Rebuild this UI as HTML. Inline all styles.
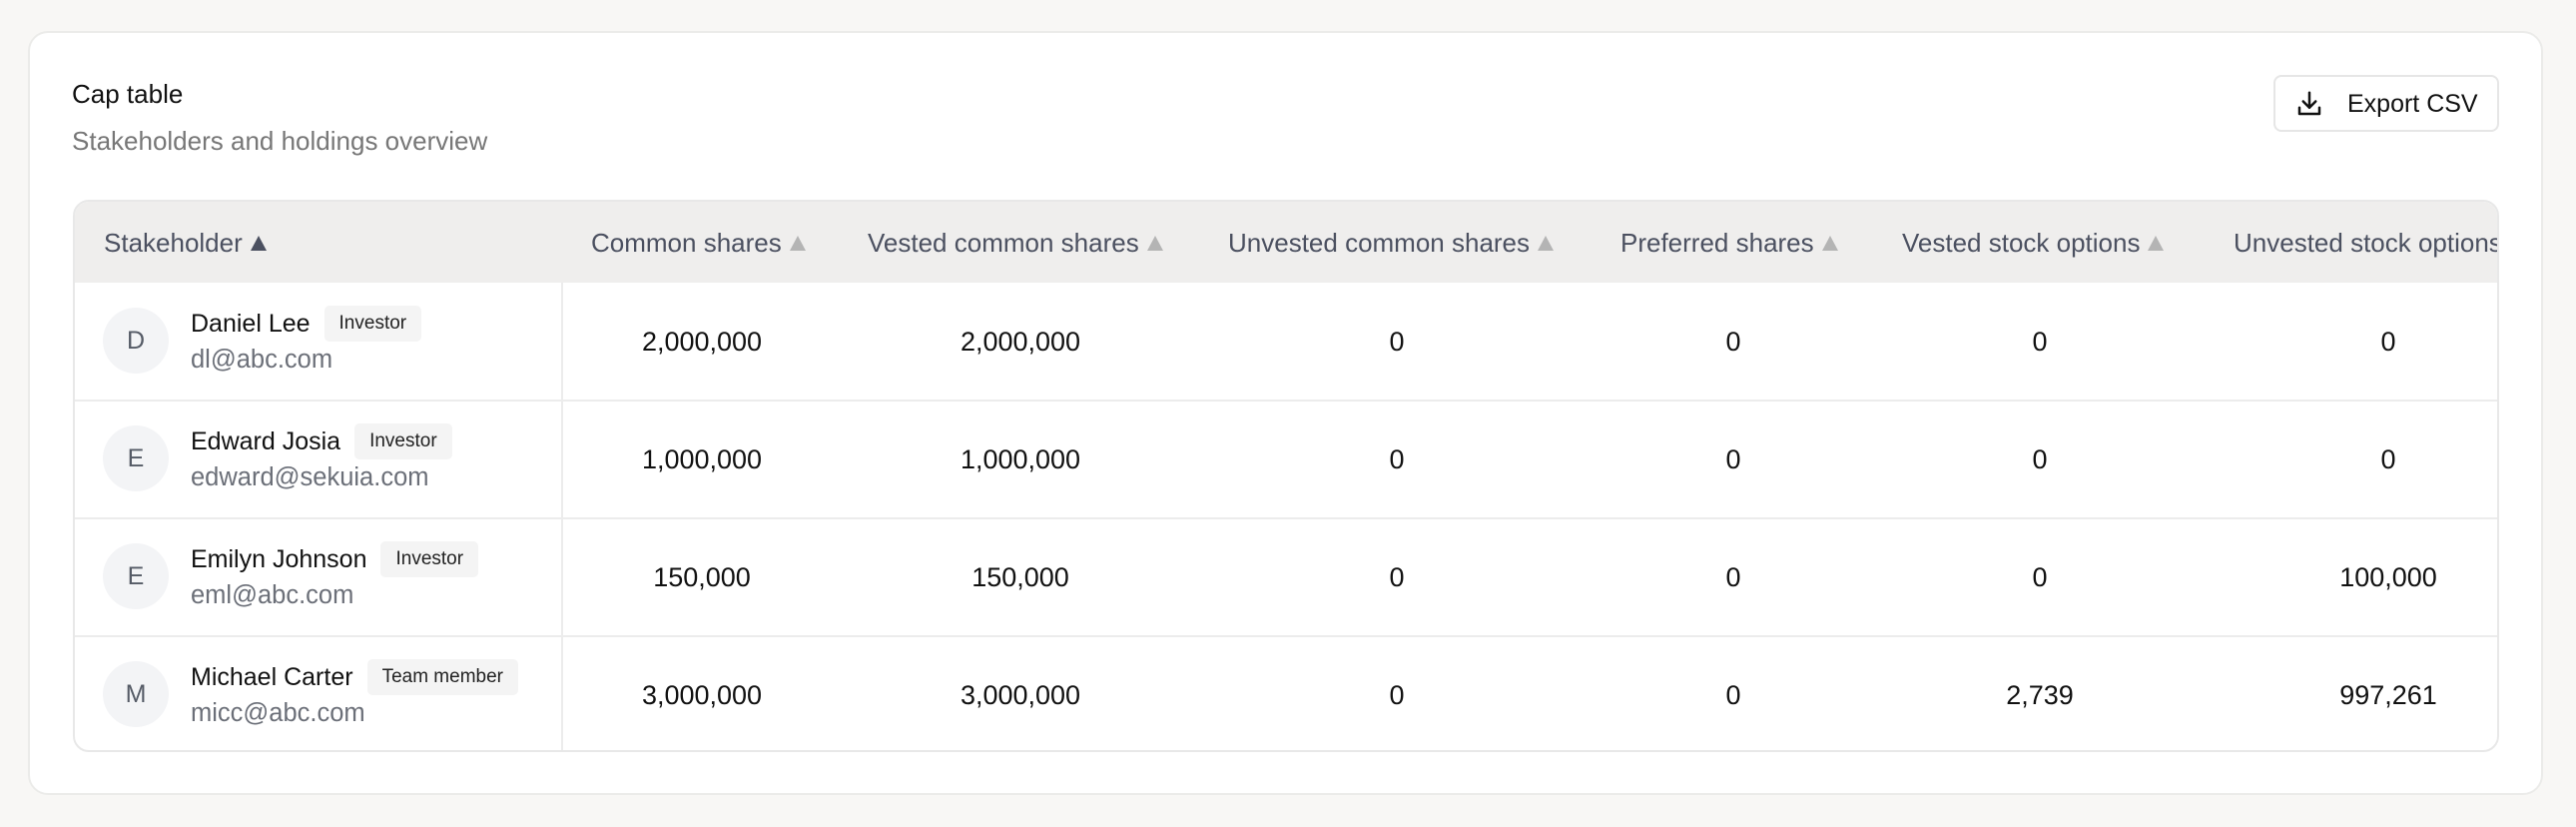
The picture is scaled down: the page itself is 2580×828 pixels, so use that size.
<!DOCTYPE html>
<html><head><meta charset="utf-8"><style>
*{box-sizing:border-box;margin:0;padding:0}
body{width:2580px;height:828px;background:#f8f7f5;font-family:"Liberation Sans",sans-serif;position:relative;overflow:hidden}
.card{position:absolute;left:28px;top:31px;width:2519px;height:765px;background:#fff;border:2px solid #ebebe9;border-radius:20px}
.abs{position:absolute;white-space:nowrap}
.title{left:72px;top:79px;font-size:26px;color:#111}
.sub{left:72px;top:126px;font-size:26px;color:#777}
.btn{position:absolute;left:2277px;top:75px;width:226px;height:57px;border:2px solid #e6e6e6;border-radius:8px;background:#fff}
.btn span{position:absolute;left:72px;top:13px;font-size:25px;color:#111}
.tbl{position:absolute;left:73px;top:200px;width:2430px;height:553px;border:2px solid #e8e8e8;border-radius:16px;overflow:hidden;background:#fff}
.hdr{position:absolute;left:0;top:0;width:100%;height:81px;background:#efeeed}
.h{position:absolute;top:26px;font-size:26px;color:#4b5060;white-space:nowrap}
.tri{display:inline-block;width:0;height:0;border-left:8px solid transparent;border-right:8px solid transparent;border-bottom:15px solid #b4b4b4;margin-left:8px;vertical-align:1px}
.vline{position:absolute;left:487px;top:81px;width:2px;height:480px;background:#ececec}
.hline{position:absolute;left:0;width:100%;height:2px;background:#ececec}
.av{position:absolute;left:28px;width:66px;height:66px;border-radius:50%;background:#f3f4f6;color:#555b66;font-size:25px;text-align:center;line-height:66px}
.nm{position:absolute;left:116px;font-size:25px;color:#111;white-space:nowrap}
.badge{display:inline-block;background:#f4f4f4;border-radius:5px;font-size:19px;padding:7px 15px;margin-left:14px;vertical-align:3px;color:#222}
.em{position:absolute;left:116px;font-size:25.5px;color:#6b6f78;white-space:nowrap}
.v{position:absolute;font-size:27px;color:#111;transform:translateX(-50%);white-space:nowrap}
</style></head><body>
<div class="card"></div>
<div class="abs title">Cap table</div>
<div class="abs sub">Stakeholders and holdings overview</div>
<div class="btn"><svg style="position:absolute;left:19px;top:12px" width="30" height="30" viewBox="0 0 24 24" fill="none" stroke="#111" stroke-width="2" stroke-linecap="round" stroke-linejoin="round"><path d="M12 3v12M7 10l5 5 5-5M4 15v5h16v-5"/></svg><span>Export CSV</span></div>
<div class="tbl">
<div class="hdr"></div>
<div class="h" style="left:29px">Stakeholder<span class="tri" style="border-bottom-color:#4b5060"></span></div>
<div class="h" style="left:517px">Common shares<span class="tri"></span></div>
<div class="h" style="left:794px">Vested common shares<span class="tri"></span></div>
<div class="h" style="left:1155px">Unvested common shares<span class="tri"></span></div>
<div class="h" style="left:1548px">Preferred shares<span class="tri"></span></div>
<div class="h" style="left:1830px">Vested stock options<span class="tri"></span></div>
<div class="h" style="left:2162px">Unvested stock options</div>
<div class="vline"></div>
<div class="hline" style="top:198px"></div>
<div class="hline" style="top:316px"></div>
<div class="hline" style="top:434px"></div>

<div class="av" style="top:106px">D</div>
<div class="nm" style="top:104px">Daniel Lee<span class="badge">Investor</span></div>
<div class="em" style="top:144px">dl@abc.com</div>
<div class="av" style="top:224px">E</div>
<div class="nm" style="top:222px">Edward Josia<span class="badge">Investor</span></div>
<div class="em" style="top:262px">edward@sekuia.com</div>
<div class="av" style="top:342px">E</div>
<div class="nm" style="top:340px">Emilyn Johnson<span class="badge">Investor</span></div>
<div class="em" style="top:380px">eml@abc.com</div>
<div class="av" style="top:460px">M</div>
<div class="nm" style="top:458px">Michael Carter<span class="badge">Team member</span></div>
<div class="em" style="top:498px">micc@abc.com</div>

<div class="v" style="left:628px;top:125px">2,000,000</div><div class="v" style="left:947px;top:125px">2,000,000</div><div class="v" style="left:1324px;top:125px">0</div><div class="v" style="left:1661px;top:125px">0</div><div class="v" style="left:1968px;top:125px">0</div><div class="v" style="left:2317px;top:125px">0</div>
<div class="v" style="left:628px;top:243px">1,000,000</div><div class="v" style="left:947px;top:243px">1,000,000</div><div class="v" style="left:1324px;top:243px">0</div><div class="v" style="left:1661px;top:243px">0</div><div class="v" style="left:1968px;top:243px">0</div><div class="v" style="left:2317px;top:243px">0</div>
<div class="v" style="left:628px;top:361px">150,000</div><div class="v" style="left:947px;top:361px">150,000</div><div class="v" style="left:1324px;top:361px">0</div><div class="v" style="left:1661px;top:361px">0</div><div class="v" style="left:1968px;top:361px">0</div><div class="v" style="left:2317px;top:361px">100,000</div>
<div class="v" style="left:628px;top:479px">3,000,000</div><div class="v" style="left:947px;top:479px">3,000,000</div><div class="v" style="left:1324px;top:479px">0</div><div class="v" style="left:1661px;top:479px">0</div><div class="v" style="left:1968px;top:479px">2,739</div><div class="v" style="left:2317px;top:479px">997,261</div>
</div>
</body></html>
